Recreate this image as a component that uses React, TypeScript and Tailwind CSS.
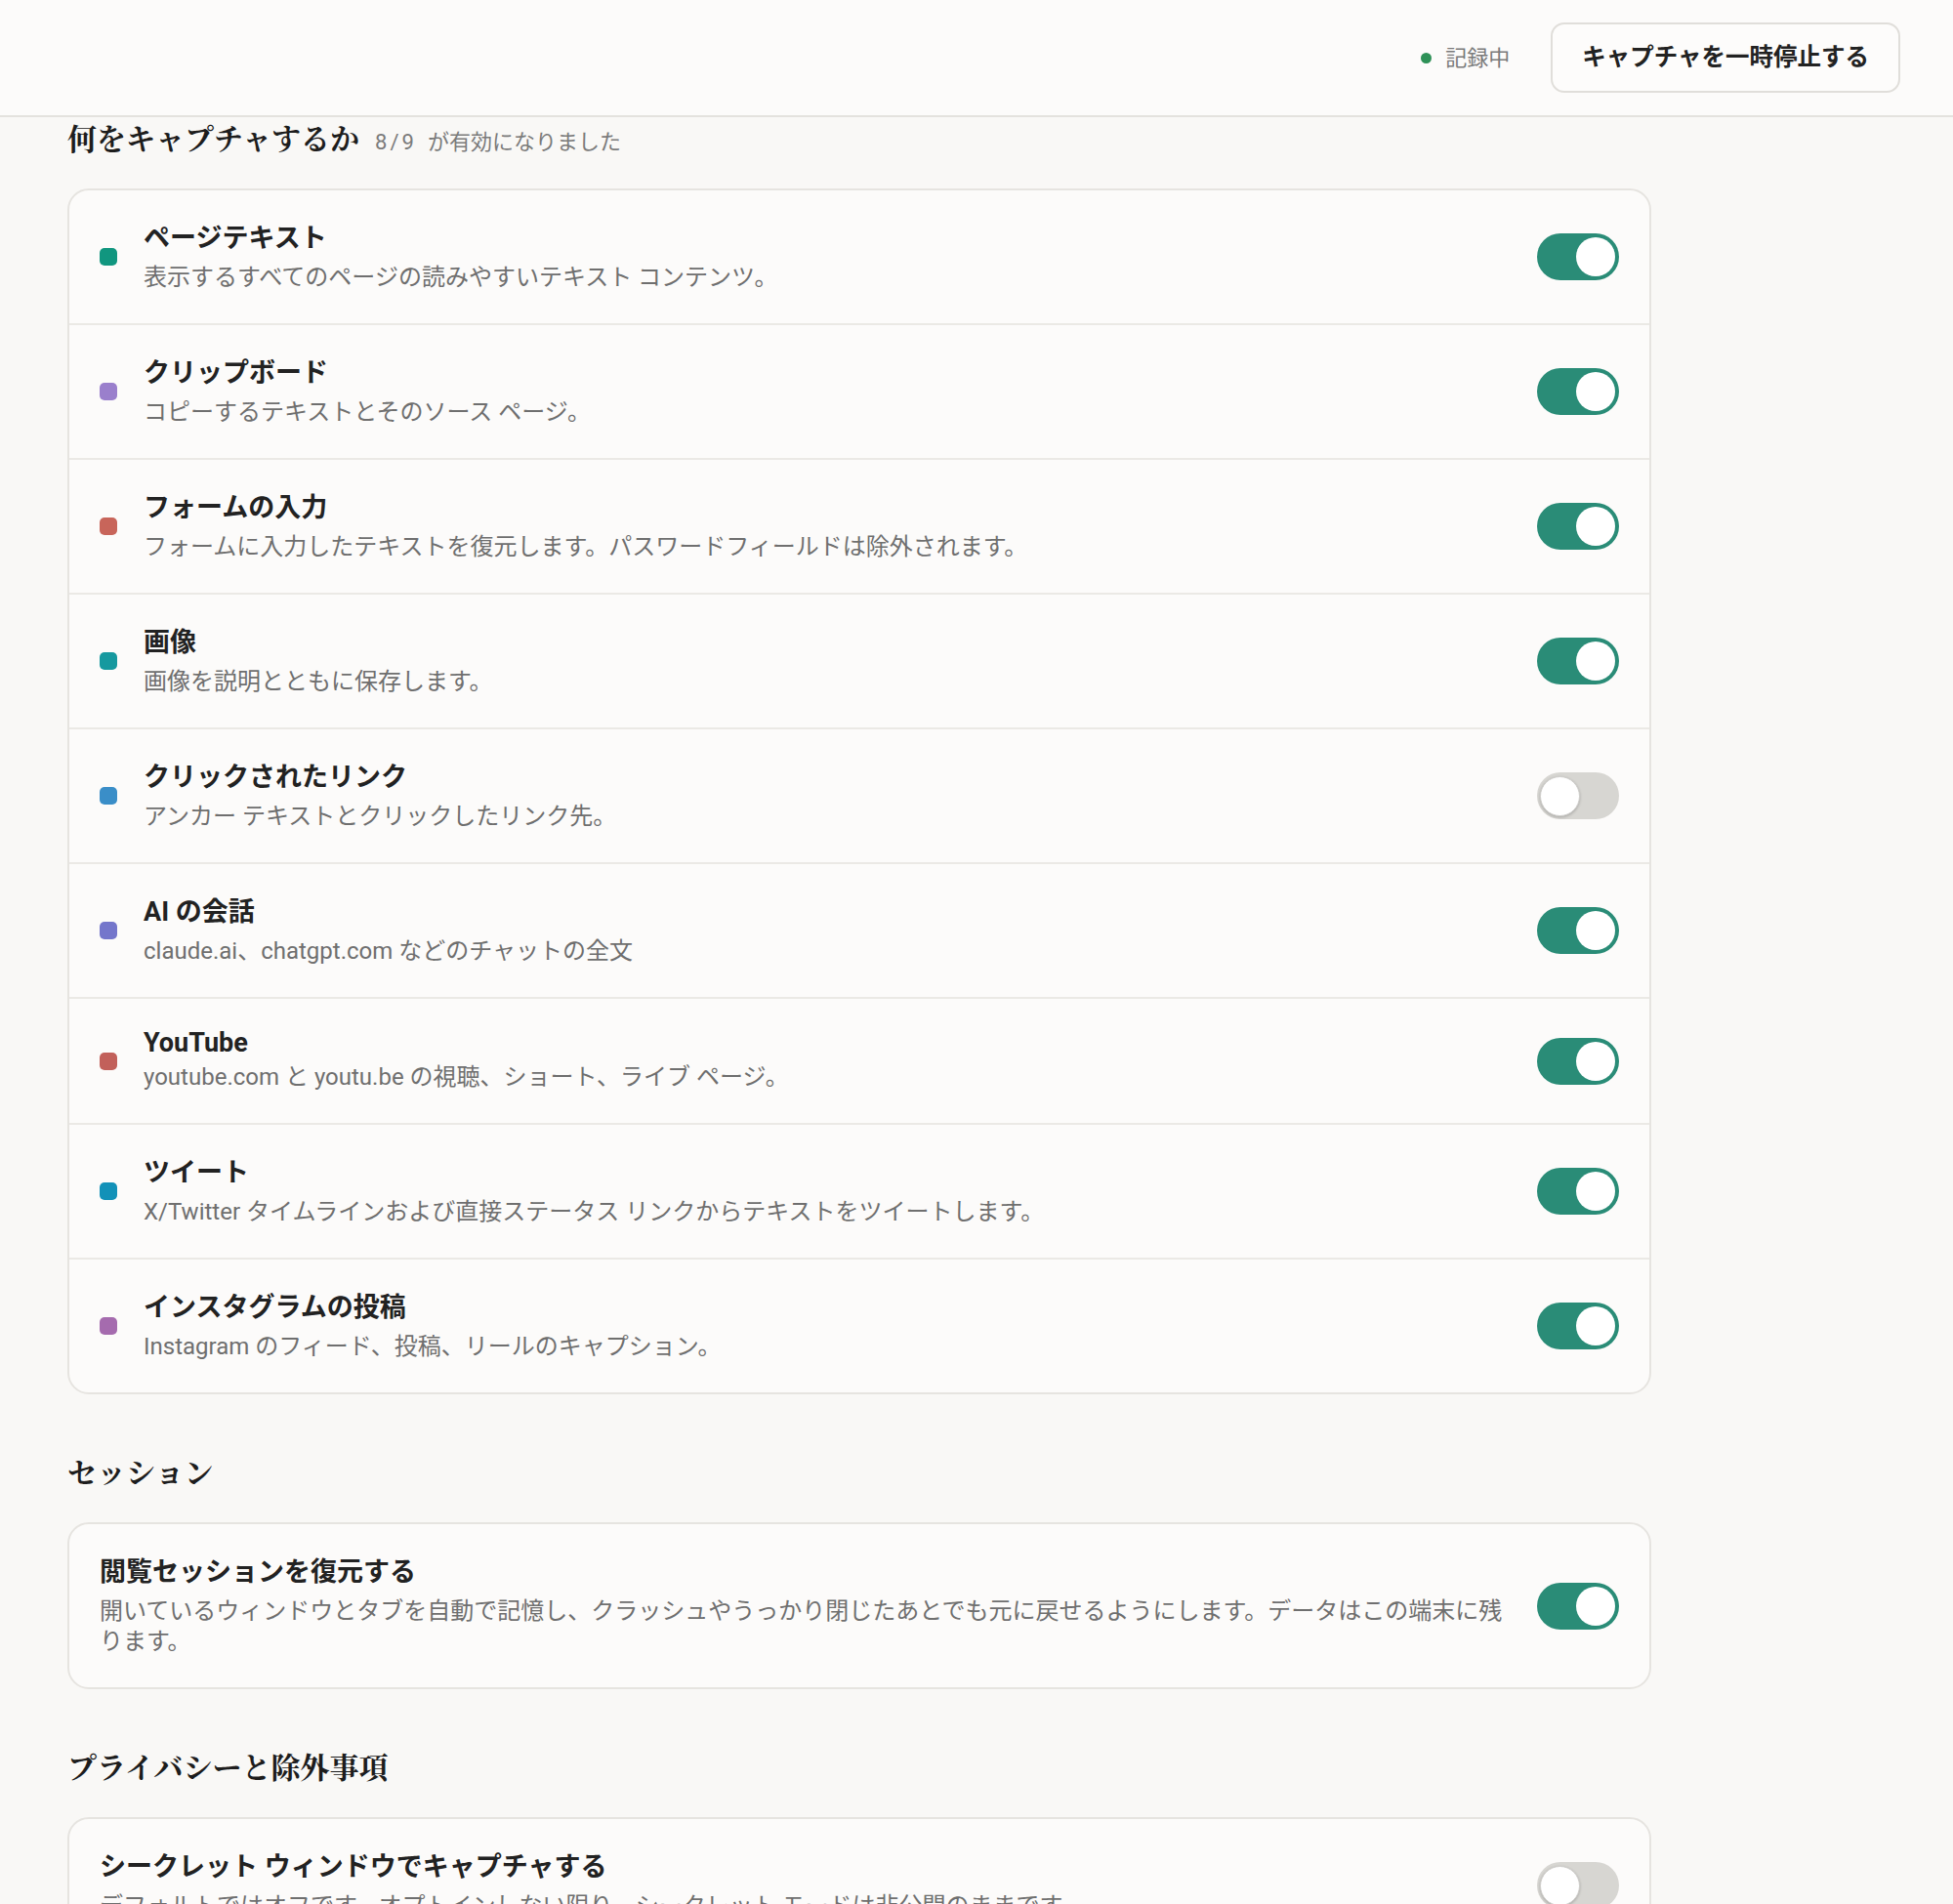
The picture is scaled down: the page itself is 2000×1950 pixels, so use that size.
import React from "react";

type Item = { title: string; desc: string; color: string; on: boolean; latin?: boolean };

const items: Item[] = [
  { title: "ページテキスト", desc: "表示するすべてのページの読みやすいテキスト コンテンツ。", color: "#11967f", on: true },
  { title: "クリップボード", desc: "コピーするテキストとそのソース ページ。", color: "#9a7fcc", on: true },
  { title: "フォームの入力", desc: "フォームに入力したテキストを復元します。パスワードフィールドは除外されます。", color: "#c8655a", on: true },
  { title: "画像", desc: "画像を説明とともに保存します。", color: "#16999f", on: true },
  { title: "クリックされたリンク", desc: "アンカー テキストとクリックしたリンク先。", color: "#3a8ec8", on: false },
  { title: "AI の会話", desc: "claude.ai、chatgpt.com などのチャットの全文", color: "#7476cb", on: true },
  { title: "YouTube", desc: "youtube.com と youtu.be の視聴、ショート、ライブ ページ。", color: "#c2605a", on: true, latin: true },
  { title: "ツイート", desc: "X/Twitter タイムラインおよび直接ステータス リンクからテキストをツイートします。", color: "#1291b8", on: true },
  { title: "インスタグラムの投稿", desc: "Instagram のフィード、投稿、リールのキャプション。", color: "#a56bae", on: true },
];

const sans = { fontFamily: 'Roboto, "Noto Sans CJK JP", sans-serif' };
const serif = { fontFamily: '"Liberation Serif", "Noto Serif CJK JP", serif' };

function Toggle({ on }: { on: boolean }) {
  return on ? (
    <div className="flex h-[48px] w-[84px] shrink-0 items-center justify-end rounded-full bg-[#2a8c77] p-[4px]">
      <div className="h-[40px] w-[40px] rounded-full bg-white" />
    </div>
  ) : (
    <div className="flex h-[48px] w-[84px] shrink-0 items-center justify-start rounded-full bg-[#d7d6d2] p-[3px]">
      <div className="h-[41px] w-[41px] rounded-full border border-[#cfcecb] bg-white shadow-[0_1px_3px_rgba(0,0,0,0.22)]" />
    </div>
  );
}

function Texts({ title, desc, latin }: { title: string; desc: string; latin?: boolean }) {
  return (
    <div className="min-w-0 flex-1">
      {latin ? (
        <div className="text-[27px] font-bold leading-[28px] text-[#222222]">{title}</div>
      ) : (
        <div className="text-[27px] font-bold leading-[36px] text-[#222222]">{title}</div>
      )}
      {latin ? (
        <div className="mt-[6px] text-[24px] leading-[31px] text-[#6f6f6f]">{desc}</div>
      ) : (
        <div className="mt-[7px] text-[24px] leading-[31px] text-[#6f6f6f]">{desc}</div>
      )}
    </div>
  );
}

function Row({ item }: { item: Item }) {
  return (
    <div className="flex items-center px-[31px] py-[31px]">
      <div className="mr-[27px] h-[18px] w-[18px] shrink-0 rounded-[5px]" style={{ backgroundColor: item.color }} />
      <Texts title={item.title} desc={item.desc} latin={item.latin} />
      <div className="ml-6">
        <Toggle on={item.on} />
      </div>
    </div>
  );
}

function SingleCard({ title, desc, on }: { title: string; desc: string; on: boolean }) {
  return (
    <div className="rounded-[22px] border-2 border-[#e6e4e0] bg-[#fcfbfa]">
      <div className="flex items-center px-[31px] py-[31px]">
        <Texts title={title} desc={desc} />
        <div className="ml-6">
          <Toggle on={on} />
        </div>
      </div>
    </div>
  );
}

export default function App() {
  return (
    <div className="min-h-[1950px] bg-[#f9f8f6]" style={sans}>
      <header className="flex h-[120px] items-center justify-end border-b-2 border-[#e4e2de] bg-[#fcfbfa] pr-[54px]">
        <div className="flex items-center">
          <span className="h-[11px] w-[11px] rounded-full bg-[#2e9157]" />
          <span className="ml-[14px] text-[22px] text-[#7a7a7a]">記録中</span>
        </div>
        <button className="ml-[42px] flex h-[72px] items-center rounded-[14px] border-2 border-[#e0deda] bg-[#fdfcfb] px-[30px] text-[24.5px] font-bold text-[#222222]">
          キャプチャを一時停止する
        </button>
      </header>

      <main className="pl-[69px] pt-[3px]">
        <div className="w-[1622px]">
          <section>
            <div className="mb-[30px] flex items-baseline">
              <h2 className="text-[30px] font-bold leading-[40px] text-[#1d1d1d]" style={serif}>
                何をキャプチャするか
              </h2>
              <span className="ml-[16px] text-[22px] tracking-[3px] text-[#7b7b7b]">8/9</span>
              <span className="ml-[11px] text-[22px] text-[#7b7b7b]">が有効になりました</span>
            </div>
            <div className="divide-y-2 divide-[#ebe9e5] rounded-[22px] border-2 border-[#e6e4e0] bg-[#fcfbfa]">
              {items.map((it) => (
                <Row key={it.title} item={it} />
              ))}
            </div>
          </section>

          <section className="mt-[61px]">
            <h2 className="mb-[30px] text-[30px] font-bold leading-[40px] text-[#1d1d1d]" style={serif}>
              セッション
            </h2>
            <SingleCard
              title="閲覧セッションを復元する"
              desc="開いているウィンドウとタブを自動で記憶し、クラッシュやうっかり閉じたあとでも元に戻せるようにします。データはこの端末に残ります。"
              on={true}
            />
          </section>

          <section className="mt-[61px] pb-[80px]">
            <h2 className="mb-[30px] text-[30px] font-bold leading-[40px] text-[#1d1d1d]" style={serif}>
              プライバシーと除外事項
            </h2>
            <SingleCard
              title="シークレット ウィンドウでキャプチャする"
              desc="デフォルトではオフです。オプトインしない限り、シークレット モードは非公開のままです。"
              on={false}
            />
          </section>
        </div>
      </main>
    </div>
  );
}
